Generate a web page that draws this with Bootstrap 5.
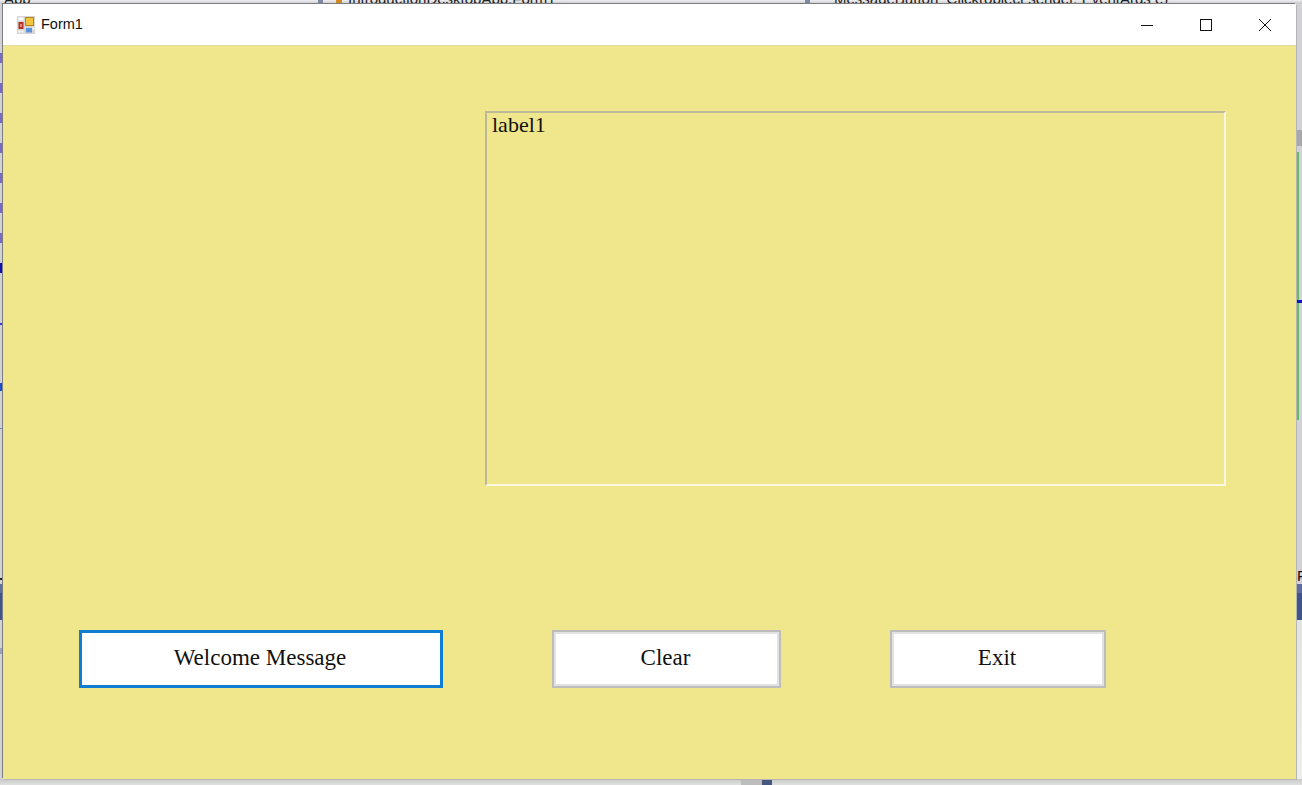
<!DOCTYPE html>
<html lang="en">
<head>
<meta charset="utf-8">
<title>Form1</title>
<link href="https://cdn.jsdelivr.net/npm/bootstrap@5.3.0/dist/css/bootstrap.min.css" rel="stylesheet">
<style>
html,body{height:100%;margin:0;overflow:hidden}
body{background:#d2d2d6;font-family:"Liberation Sans",sans-serif;position:relative;width:1302px;height:785px}
.desk-txt{position:absolute;font:15px "Liberation Sans",sans-serif;color:#222;white-space:nowrap;line-height:17px}
.desk-bar{position:absolute}
.tick{left:0;width:2px;height:10px;background:#7a68c8}
.win{position:absolute;left:3px;top:4px;width:1293px;height:775px;background:#f0e68c;display:flex;flex-direction:column;box-shadow:-1px -1px 0 #7d7d80,1px 1px 0 #b5b5b5}
.titlebar{height:42px;background:#fff;border-bottom:1px solid #e3dca0;flex:none}
.app-ico{width:18px;height:18px;margin-left:14px;margin-right:6px;flex:none}
.ttl{font:14.5px "Liberation Sans",sans-serif;color:#111;margin-top:-1px}
.ctl{width:59px;height:40px;display:flex;align-items:center;justify-content:center;flex:none}
.ctls{margin-right:2px}
.formbody{flex:1 1 auto;padding:65px 0 0 0}
.lbl{margin-left:482px;width:741px;height:375px;border:2px solid;border-color:#bcb89a #faf7df #faf7df #bcb89a;font:22px/1 "Liberation Serif",serif;color:#111;padding:1px 0 0 5px}
.btnrow{margin-top:144px;padding-left:76px}
.wbtn{height:58px;background:#fff;border:2px solid #bdbdbd;box-shadow:inset 0 0 0 2px #e2e2e2;font:23px "Liberation Serif",serif;color:#111;border-radius:0;padding:0 2px 2px 0}
.wbtn.focusd{border:3px solid #0f7ed2;box-shadow:none}
.w1{width:364px}.w2{width:229px;margin-left:109px}.w3{width:216px;margin-left:109px}
</style>
</head>
<body>
<div class="desk-bar" style="left:0;top:0;width:1302px;height:4px;background:linear-gradient(#f0f0f2,#c4c4c8)"></div>
<div class="desk-txt" style="left:4px;top:-10px">App</div>
<div class="desk-bar" style="left:318px;top:0;width:5px;height:4px;background:#7d8aa8"></div>
<div class="desk-bar" style="left:336px;top:0;width:6px;height:4px;background:#d08a20"></div>
<div class="desk-txt" style="left:348px;top:-10px">IntroductionDesktopApp.Form1</div>
<div class="desk-bar" style="left:805px;top:0;width:5px;height:4px;background:#7d8aa8"></div>
<div class="desk-txt" style="left:834px;top:-10px">MessageButton_Click(object sender, EventArgs e)</div>
<div class="desk-bar tick" style="top:53px"></div>
<div class="desk-bar tick" style="top:83px"></div>
<div class="desk-bar tick" style="top:113px"></div>
<div class="desk-bar tick" style="top:143px"></div>
<div class="desk-bar tick" style="top:173px"></div>
<div class="desk-bar tick" style="top:203px"></div>
<div class="desk-bar tick" style="top:233px"></div>
<div class="desk-bar tick" style="top:263px;background:#1010b0"></div>
<div class="desk-bar" style="left:0;top:323px;width:2px;height:2px;background:#3a3ac0"></div>
<div class="desk-bar" style="left:0;top:383px;width:2px;height:8px;background:#1a4fd0"></div>
<div class="desk-bar" style="left:0;top:428px;width:2px;height:1px;background:#5a8fd0"></div>
<div class="desk-bar" style="left:1296px;top:130px;width:6px;height:16px;background:#a8a8ac"></div>
<div class="desk-bar" style="left:1296px;top:152px;width:3px;height:268px;background:#66bb66"></div>
<div class="desk-bar" style="left:1296px;top:300px;width:6px;height:3px;background:#1414c0"></div>
<div class="desk-bar" style="left:1296px;top:578px;width:6px;height:1px;background:#b5b5b9"></div>
<div class="desk-bar" style="left:1296px;top:584px;width:6px;height:36px;background:linear-gradient(#5d6f9a 25%,#3f5488 25%)"></div>
<div class="desk-bar" style="left:0;top:584px;width:3px;height:36px;background:linear-gradient(#5d6f9a 25%,#3f5488 25%)"></div>
<div class="desk-bar" style="left:0;top:578px;width:3px;height:2px;background:#222"></div>
<div class="desk-bar" style="left:0;top:648px;width:3px;height:6px;background:#9aa4c0"></div>
<div class="desk-bar" style="left:1296px;top:620px;width:6px;height:165px;background:linear-gradient(#e2e2e2,#eee)"></div>
<div class="desk-bar" style="left:0;top:779px;width:1302px;height:6px;background:linear-gradient(#c8c8c8,#e0e0e0)"></div>
<div class="desk-bar" style="left:741px;top:779px;width:21px;height:6px;background:#bdbdbd"></div>
<div class="desk-bar" style="left:762px;top:779px;width:10px;height:6px;background:#46587f"></div>
<div class="desk-txt" style="left:1297px;top:567px;color:#111">F</div>

<div class="win">
  <div class="titlebar d-flex align-items-center">
    <svg class="app-ico" viewBox="0 0 18 18">
      <rect width="18" height="18" fill="#d6d6d6"/>
      <rect x="1.5" y="1.5" width="5" height="3" fill="#fff"/>
      <rect x="1.5" y="6" width="5" height="7" fill="#b5302a"/>
      <rect x="3" y="8" width="2" height="3" fill="#e58a70"/>
      <rect x="8" y="1" width="9" height="9" fill="#b8861c"/>
      <rect x="9" y="2" width="7" height="7" fill="#f2c53d"/>
      <rect x="9" y="12" width="6" height="4.5" fill="#5b93dc"/>
      <rect x="1.5" y="14.5" width="2" height="2" fill="#fff"/>
      <rect x="4.5" y="14.5" width="2" height="2" fill="#fff"/>
      <rect x="15.5" y="11.5" width="2" height="2" fill="#fff"/>
    </svg>
    <span class="ttl">Form1</span>
    <div class="ctls d-flex ms-auto">
      <div class="ctl"><svg width="12" height="12" viewBox="0 0 12 12"><path d="M0 6.5h12" stroke="#111" fill="none"/></svg></div>
      <div class="ctl"><svg width="12" height="12" viewBox="0 0 12 12"><rect x=".5" y=".5" width="11" height="11" stroke="#111" fill="none"/></svg></div>
      <div class="ctl"><svg width="12" height="12" viewBox="0 0 12 12"><path d="M0 0l12 12M12 0L0 12" stroke="#111" fill="none"/></svg></div>
    </div>
  </div>
  <div class="formbody">
    <div class="lbl">label1</div>
    <div class="btnrow d-flex">
      <button type="button" class="btn wbtn focusd w1">Welcome Message</button>
      <button type="button" class="btn wbtn w2">Clear</button>
      <button type="button" class="btn wbtn w3">Exit</button>
    </div>
  </div>
</div>
<script src="https://cdn.jsdelivr.net/npm/bootstrap@5.3.0/dist/js/bootstrap.bundle.min.js"></script>
</body>
</html>
